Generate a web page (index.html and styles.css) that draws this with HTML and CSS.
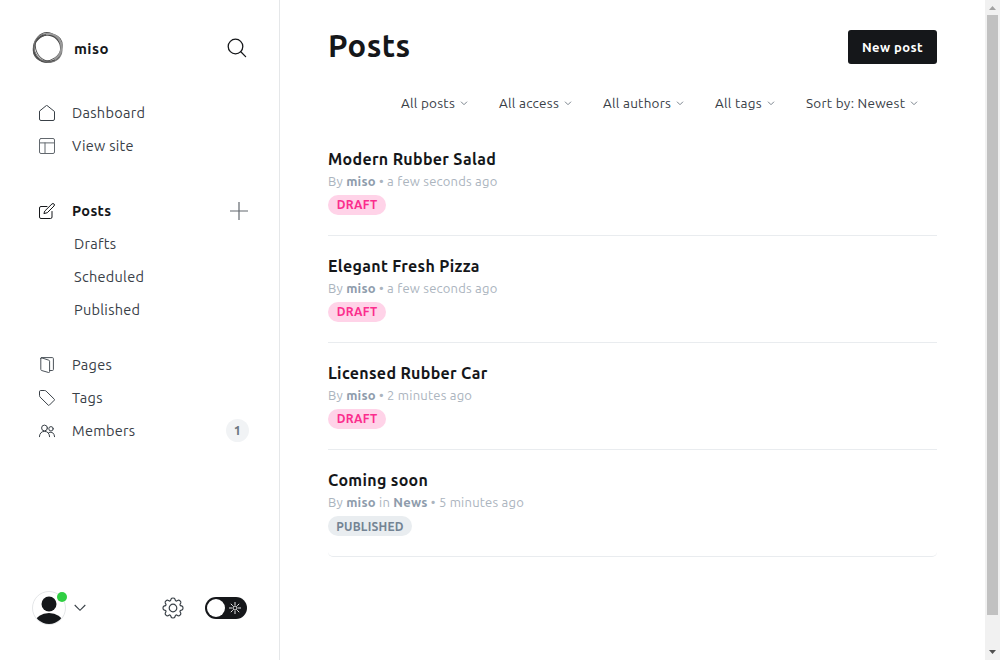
FILE: index.html
```html
<!DOCTYPE html>
<html lang="en">
<head>
<meta charset="utf-8">
<title>Posts - miso</title>
<link rel="stylesheet" href="styles.css">
</head>
<body>
<div class="app">
  <nav class="sidebar">
    <header class="brand">
      <svg class="brand-logo" viewBox="0 0 32 32" fill="none">
        <circle cx="15.300" cy="16.500" r="13.600" stroke="#444" stroke-width="1.700"/>
        <ellipse cx="16" cy="15.500" rx="15.300" ry="12.500" stroke="#555" stroke-width="1" transform="rotate(-35 16 16)"/>
        <ellipse cx="16.700" cy="15.300" rx="12.600" ry="14.800" stroke="#555" stroke-width="1" transform="rotate(-25 16 16)"/>
        <ellipse cx="16" cy="16" rx="15" ry="13.300" stroke="#777" stroke-width="1" transform="rotate(50 16 16)"/>
        <path d="M14 2.500c7-2 13 2 14.500 8M28.500 10c2.500 8-1 14-6 17.500" stroke="#999" stroke-width="2"/>
      </svg>
      <span class="brand-name">miso</span>
      <svg class="search" viewBox="0 0 20 20"><circle cx="8.500" cy="8.500" r="7.300"/><path d="M13.800 13.800 18.600 18.600"/></svg>
    </header>

    <ul class="menu">
      <li><svg class="icon" viewBox="0 0 16 16"><path d="M.5 6.500v7.500q0 1.500 1.500 1.500h12q1.500 0 1.500-1.500V6.500L8 .5z"/></svg><span>Dashboard</span></li>
      <li><svg class="icon soft" viewBox="0 0 16 16"><rect x=".5" y=".5" width="15" height="15" rx="1.500"/><path d="M.5 4.900h15M6 4.900v10.600"/></svg><span>View site</span></li>
    </ul>

    <ul class="menu posts-menu">
      <li class="active"><svg class="icon" viewBox="0 0 16 16"><path d="M8 3.500H2Q.5 3.500.5 5v9q0 1.500 1.500 1.500h9.500Q13 15.500 13 14V8.500M6 7.800 13 .9q1.200-.8 2.100.1.700 1-.1 2L8.300 9.700l-3 .8z"/></svg><span>Posts</span><svg class="plus" viewBox="0 0 18 18"><path d="M9 0v18M0 9h18"/></svg></li>
      <li class="sub"><span>Drafts</span></li>
      <li class="sub"><span>Scheduled</span></li>
      <li class="sub"><span>Published</span></li>
    </ul>

    <ul class="menu content-menu">
      <li><svg class="icon pages-icon" viewBox="0 0 16 16"><path d="M1.800 1.300v11.200q0 .8.800 1l7 2q1 .2 1-.8V4.200q0-.8-.8-1L2.600.8q-.8-.2-.8.5zM2.400.6h11q1 0 1 1v10.900q0 1-1 1h-2.800"/></svg><span>Pages</span></li>
      <li><svg class="icon" viewBox="0 0 16 16"><path d="M.5 1.500q0-1 1-1h4.200q.8 0 1.400.6l8.200 8.100q.5.500 0 1l-5 5q-.5.500-1 0L1.100 7.100q-.6-.6-.6-1.400z"/></svg><span>Tags</span></li>
      <li><svg class="icon" viewBox="0 0 16 16"><circle cx="5.500" cy="5" r="2.900"/><circle cx="12" cy="5.800" r="2.200"/><path d="M.4 13.700q.4-5.300 5.100-5.300t5.100 5.300M10 9.400q4.900-1.500 5.600 4.300"/></svg><span>Members</span><b class="count">1</b></li>
    </ul>

    <footer class="account">
      <div class="avatar">
        <svg viewBox="0 0 34 34"><defs><clipPath id="face"><circle cx="17" cy="17" r="16"/></clipPath></defs><circle cx="17" cy="17" r="16.500" fill="#fff" stroke="#e4e6e8"/><g clip-path="url(#face)" fill="#15171a"><circle cx="17" cy="13" r="7.500"/><ellipse cx="17" cy="31.500" rx="13.500" ry="9.500"/></g></svg>
        <i class="online"></i>
      </div>
      <svg class="account-arrow" viewBox="0 0 12 8"><path d="m.7 1 5.300 5.300L11.300 1"/></svg>
      <svg class="gear" viewBox="-11 -11 22 22"><defs><path id="tooth" d="M-2.900-7C-2.100-7.500-2.200-8.300-1.900-9.100-1.500-10-.8-10 0-10S1.500-10 1.900-9.100C2.200-8.300 2.100-7.500 2.900-7"/></defs><use href="#tooth"/><use href="#tooth" transform="rotate(45)"/><use href="#tooth" transform="rotate(90)"/><use href="#tooth" transform="rotate(135)"/><use href="#tooth" transform="rotate(180)"/><use href="#tooth" transform="rotate(225)"/><use href="#tooth" transform="rotate(270)"/><use href="#tooth" transform="rotate(315)"/><circle r="3.800"/></svg>
      <div class="night-toggle"><i class="knob"></i><svg viewBox="0 0 12 12"><circle cx="6" cy="6" r="2"/><path d="M6 0v3M6 9v3M0 6h3M9 6h3M1.800 1.800l2 2M8.200 8.200l2 2M1.800 10.200l2-2M8.200 3.800l2-2"/></svg></div>
    </footer>
  </nav>

  <main class="main">
    <header class="title-bar"><h1>Posts</h1><button class="new-post">New post</button></header>
    <div class="filters">
      <div class="filter f-posts"><span>All posts</span><svg viewBox="0 0 8 5"><path d="m1 .7 3 3 3-3"/></svg></div>
      <div class="filter f-access"><span>All access</span><svg viewBox="0 0 8 5"><path d="m1 .7 3 3 3-3"/></svg></div>
      <div class="filter f-authors"><span>All authors</span><svg viewBox="0 0 8 5"><path d="m1 .7 3 3 3-3"/></svg></div>
      <div class="filter f-tags"><span>All tags</span><svg viewBox="0 0 8 5"><path d="m1 .7 3 3 3-3"/></svg></div>
      <div class="filter f-sort"><span>Sort by: Newest</span><svg viewBox="0 0 8 5"><path d="m1 .7 3 3 3-3"/></svg></div>
    </div>
    <section class="list">
      <article class="post"><h2>Modern Rubber Salad</h2><p>By <b>miso</b> • a few seconds ago</p><span class="badge draft">DRAFT</span></article>
      <article class="post"><h2>Elegant Fresh Pizza</h2><p>By <b>miso</b> • a few seconds ago</p><span class="badge draft">DRAFT</span></article>
      <article class="post"><h2>Licensed Rubber Car</h2><p>By <b>miso</b> • 2 minutes ago</p><span class="badge draft">DRAFT</span></article>
      <article class="post"><h2>Coming soon</h2><p>By <b>miso</b> in <b>News</b> • 5 minutes ago</p><span class="badge published">PUBLISHED</span></article>
    </section>
  </main>

  <div class="scrollbar">
    <svg viewBox="0 0 7 4"><path d="M0 4h7L3.500 0z" fill="#a3a3a3"/></svg>
    <div class="thumb"></div>
    <svg class="down" viewBox="0 0 7 4"><path d="M0 0h7L3.500 4z" fill="#505050"/></svg>
  </div>
</div>
</body>
</html>
```
FILE: styles.css
```css
* { box-sizing: border-box; margin: 0; padding: 0; }
body { width: 1000px; height: 660px; overflow: hidden; background: #fff; color: #15171a; font-family: Ubuntu, "Noto Sans", "Open Sans", sans-serif; }
svg { display: block; flex: none; fill: none; }
span, h1, h2, p, button { white-space: nowrap; }
.app { display: flex; height: 660px; }

.sidebar { width: 280px; flex: none; border-right: 1px solid #e5e7e9; display: flex; flex-direction: column; }
.brand { display: flex; align-items: center; height: 32px; margin: 32px 32px 0 32px; }
.brand-logo { width: 32px; height: 32px; }
.brand-name { margin-left: 10px; padding-top: 1px; font-size: 15px; font-weight: 700; line-height: 20px; letter-spacing: .4px; }
.search { width: 20px; height: 20px; margin-left: auto; stroke: #15171a; stroke-width: 1.3; stroke-linecap: round; }
.menu { list-style: none; margin: 32px 30px 0 39px; font-size: 14.5px; letter-spacing: .28px; color: #394047; }
.menu li { display: flex; align-items: center; height: 33px; }
.posts-menu { margin-top: 32px; }
.content-menu { margin-top: 22px; }
.icon { width: 16px; height: 16px; margin-right: 17px; stroke: #394047; stroke-width: 1; stroke-linejoin: round; stroke-linecap: round; }
.soft { stroke: #62686e; }
.pages-icon { stroke: #4b5259; }
.menu .active { color: #15171a; font-weight: 700; letter-spacing: .35px; }
.active .icon { stroke: #15171a; }
.plus { width: 18px; height: 18px; margin: 0 1px 0 auto; stroke: #62686e; stroke-width: 1.2; }
.menu .sub { padding-left: 35px; }
.count { margin-left: auto; width: 23px; height: 23px; border-radius: 50%; background: #f1f3f5; color: #6b7680; font-size: 13px; font-weight: 600; line-height: 23px; letter-spacing: 0; text-align: center; }
.account { margin-top: auto; height: 104px; padding: 0 32px; display: flex; align-items: center; }
.avatar { position: relative; width: 34px; height: 34px; }
.online { position: absolute; top: 1px; right: -1px; width: 10px; height: 10px; border-radius: 50%; background: #30cf43; }
.account-arrow { width: 12px; height: 8px; margin-left: 8px; stroke: #394047; stroke-width: 1.1; }
.gear { width: 22px; height: 22px; margin-left: auto; stroke: #394047; stroke-width: 1.2; }
.night-toggle { width: 42px; height: 22px; margin-left: 21px; padding: 2px; border-radius: 11px; background: #15171a; display: flex; align-items: center; }
.knob { width: 18px; height: 18px; border-radius: 50%; background: #fff; }
.night-toggle svg { width: 12px; height: 12px; margin-left: 4px; stroke: #fff; stroke-width: .9; }

.main { flex: 1; padding: 30px 48px 0; }
.title-bar { display: flex; justify-content: space-between; height: 34px; }
h1 { font-size: 31px; font-weight: 700; line-height: 32px; letter-spacing: .4px; }
.new-post { width: 89px; height: 34px; border: 0; border-radius: 3px; background: #15171a; color: #fff; font: 600 13px/34px Ubuntu, "Noto Sans", sans-serif; letter-spacing: .4px; }
.filters { display: flex; justify-content: flex-end; margin-top: 29px; padding-right: 19px; height: 20px; font-size: 13.5px; line-height: 20px; letter-spacing: .25px; color: #394047; }
.filter { display: flex; align-items: center; justify-content: space-between; }
.filter svg { width: 8px; height: 5px; stroke: #7c858e; }
.f-posts { width: 67px; margin-right: 31px; }
.f-access { width: 73px; margin-right: 31px; }
.f-authors { width: 81px; margin-right: 31px; }
.f-tags { width: 60px; margin-right: 31px; }
.f-sort { width: 112px; }
.list { margin-top: 16px; border-radius: 5px; border-bottom: 1px solid #e9ecef; }
.post { height: 107px; padding-top: 19px; border-bottom: 1px solid #e9ecef; }
.post:last-child { height: 106px; border-bottom: 0; }
h2 { font-size: 16px; font-weight: 600; line-height: 22px; letter-spacing: .32px; }
.post p { color: #abb4be; font-size: 13px; line-height: 20px; letter-spacing: .22px; margin-top: 1px; }
.post b { color: #8e9cac; font-weight: 600; }
.badge { display: block; width: 58px; height: 20px; margin-top: 4px; border-radius: 10px; font-size: 12px; font-weight: 600; line-height: 20px; letter-spacing: .2px; text-align: center; }
.draft { background: #ffd3e8; color: #fb2d8d; }
.published { width: 84px; background: #e9edf0; color: #738393; line-height: 21px; }

.scrollbar { width: 15px; background: #f1f1f1; display: flex; flex-direction: column; align-items: center; padding-top: 6px; }
.scrollbar svg { width: 7px; height: 4px; }
.thumb { width: 11px; height: 600px; margin-top: 5px; background: #c1c1c1; }
.scrollbar .down { margin-top: 35px; }
```
